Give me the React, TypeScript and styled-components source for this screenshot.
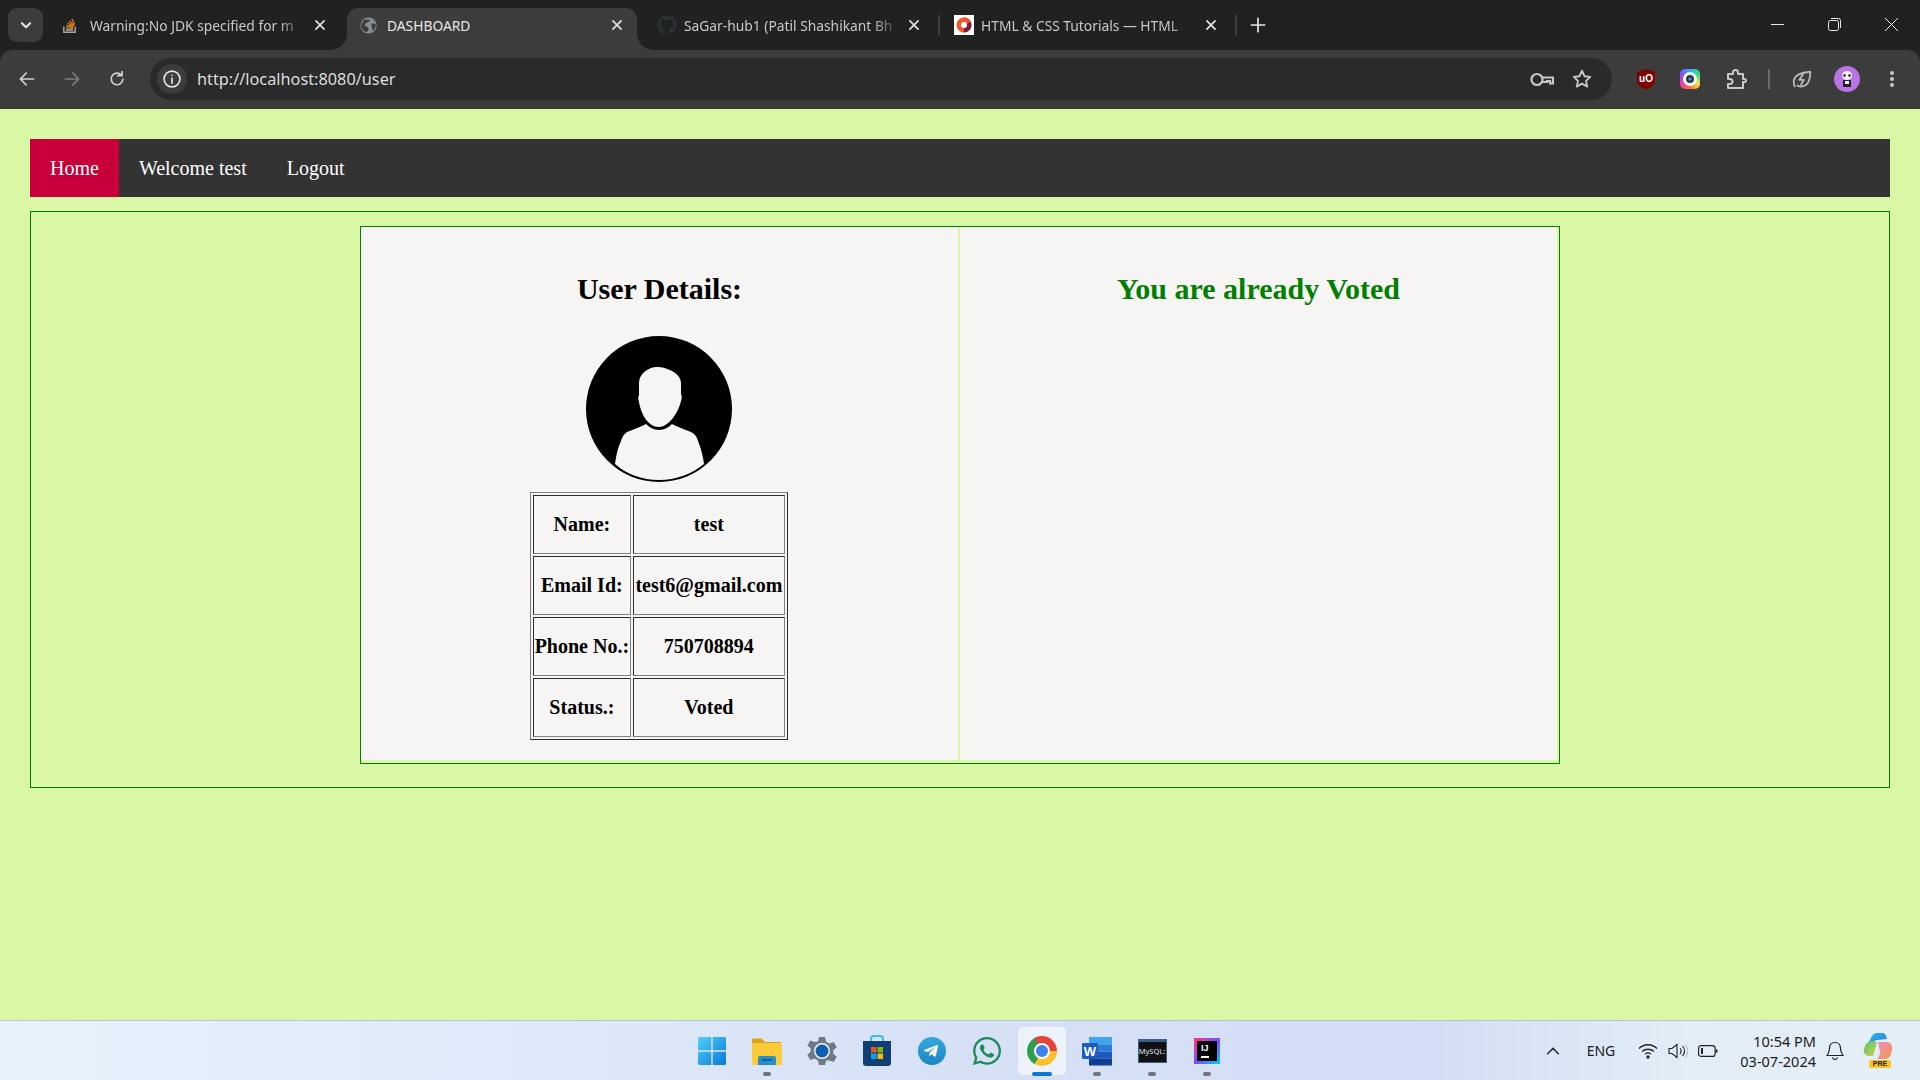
import { ReactNode } from "react";
import { FaGithub, FaTelegramPlane, FaWhatsapp } from "react-icons/fa";
import styled, { createGlobalStyle } from "styled-components";

const UI_FONT = `"Noto Sans", "Open Sans", sans-serif`;

const GlobalStyle = createGlobalStyle`
  html, body {
    margin: 0;
    padding: 0;
    height: 100%;
    overflow: hidden;
    background: #daf7a6;
  }
  #root {
    height: 100%;
  }
`;

const Screen = styled.div`
  display: flex;
  flex-direction: column;
  height: 1080px;
  background: #202222;
`;

/* browser chrome */
const TabStrip = styled.div`
  display: flex;
  align-items: flex-end;
  height: 50px;
  background: #202222;
  font-family: ${UI_FONT};
`;

const TabSearch = styled.div`
  display: flex;
  align-items: center;
  justify-content: center;
  width: 35px;
  height: 34px;
  margin: 0 7px 8px 8px;
  border-radius: 9px;
  background: #3c3c3c;
`;

const Tab = styled.div<{ $active?: boolean; $divider?: boolean }>`
  position: relative;
  display: flex;
  align-items: center;
  flex: 0 0 290px;
  min-width: 0;
  height: 42px;
  margin-right: 7px;
  padding: 0 13px 8px 13px;
  box-sizing: border-box;
  border-radius: 11px 11px 0 0;
  background: ${({ $active }) => ($active ? "#3c3c3c" : "transparent")};
  color: ${({ $active }) => ($active ? "#e8e8e8" : "#c8c8c8")};
  font-size: 13.8px;

  ${({ $active }) =>
    $active &&
    `
    &::before, &::after {
      content: "";
      position: absolute;
      bottom: 0;
      width: 16px;
      height: 16px;
    }
    &::before {
      left: -16px;
      background: radial-gradient(circle at 0 0, #202222 15.5px, #3c3c3c 16px);
    }
    &::after {
      right: -16px;
      background: radial-gradient(circle at 100% 0, #202222 15.5px, #3c3c3c 16px);
    }
  `}

  ${({ $divider }) =>
    $divider &&
    `
    &::after {
      content: "";
      position: absolute;
      right: -6px;
      top: 7px;
      width: 2px;
      height: 20px;
      background: #3f4141;
    }
  `}
`;

const TabIcon = styled.span`
  display: flex;
  flex: 0 0 20px;
  justify-content: flex-start;
  margin-right: 7px;
`;

const TabLabel = styled.span<{ $fade?: boolean }>`
  flex: 1;
  min-width: 0;
  white-space: nowrap;
  margin-right: 10px;
  ${({ $fade }) =>
    $fade &&
    `mask-image: linear-gradient(90deg, #000 88%, rgba(0, 0, 0, 0.15) 100%);`}
`;

const NewTab = styled.div`
  display: flex;
  align-items: center;
  margin: 0 0 10px 10px;
  height: 30px;
  flex: 1;
`;

const WindowControls = styled.div`
  display: flex;
  align-self: flex-start;
  align-items: center;
  gap: 44px;
  height: 48px;
  padding-right: 22px;
`;

const Toolbar = styled.div`
  display: flex;
  align-items: center;
  height: 59px;
  padding: 0 0 1px 17px;
  box-sizing: border-box;
  border-radius: 12px 12px 0 0;
  background: #3c3c3c;
  font-family: ${UI_FONT};
`;

const NavIcons = styled.div`
  display: flex;
  align-items: center;
  gap: 25px;
  width: 133px;
`;

const Omnibox = styled.div`
  display: flex;
  align-items: center;
  width: 1462px;
  height: 42px;
  padding-right: 19px;
  box-sizing: border-box;
  border-radius: 21px;
  background: #292a2a;
`;

const InfoChip = styled.div`
  display: flex;
  align-items: center;
  justify-content: center;
  width: 30px;
  height: 30px;
  margin: 0 10px 0 7px;
  border-radius: 50%;
  background: #3c3c3c;
`;

const UrlText = styled.span`
  flex: 1;
  color: #dedede;
  font-size: 16.3px;
`;

const OmniboxActions = styled.div`
  display: flex;
  align-items: center;
  gap: 17px;
`;

const Extensions = styled.div`
  display: flex;
  align-items: center;
  margin-left: 20px;
`;

const ExtSlot = styled.div<{ $w: number }>`
  display: flex;
  align-items: center;
  justify-content: center;
  width: ${({ $w }) => $w}px;
`;

const ToolbarDivider = styled.div`
  width: 2px;
  height: 20px;
  background: #6a6a6a;
`;

const ColorRing = styled.div`
  display: flex;
  align-items: center;
  justify-content: center;
  width: 20px;
  height: 20px;
  border-radius: 5px;
  background: conic-gradient(#2db4ff, #2be07d, #f7e04b, #f5703c, #f23aa3, #8a4dff, #2db4ff);
`;

const RingCenter = styled.div`
  width: 8px;
  height: 8px;
  border-radius: 50%;
  border: 3px solid #fff;
  background: radial-gradient(circle, #5d86a8 0 20%, #25394d 35%);
`;

/* page */
const Page = styled.main`
  flex: 1;
  padding: 30px 30px 0;
  background: #daf7a6;
  font-family: "Liberation Serif", "Times New Roman", serif;
`;

const NavBar = styled.nav`
  display: flex;
  height: 58px;
  background: #333;
`;

const NavLink = styled.a<{ $active?: boolean }>`
  display: flex;
  align-items: center;
  padding: 0 20px;
  background: ${({ $active }) => ($active ? "#c70039" : "transparent")};
  color: #fff;
  font-size: 20px;
`;

const Section = styled.section`
  height: 577px;
  margin-top: 14px;
  padding-top: 14px;
  box-sizing: border-box;
  border: 1px solid green;
`;

const Card = styled.div`
  display: grid;
  grid-template-columns: 599px 597px;
  width: 1200px;
  height: 538px;
  margin: 0 auto;
  padding: 0 2px 3px 0;
  box-sizing: border-box;
  border: 1px solid green;
`;

const Column = styled.div<{ $divided?: boolean }>`
  display: flex;
  flex-direction: column;
  align-items: center;
  padding-top: 45px;
  box-sizing: border-box;
  background: #f6f5f3;
  border-right: ${({ $divided }) => ($divided ? "2px solid #daf7a6" : "none")};
`;

const Heading = styled.h2<{ $ok?: boolean }>`
  margin: 0;
  font-size: 30px;
  line-height: 34px;
  font-weight: bold;
  color: ${({ $ok }) => ($ok ? "green" : "#000")};
`;

const Avatar = styled.svg`
  display: block;
  width: 146px;
  height: 146px;
  margin: 30px 2px 10px 0;
`;

const DetailsTable = styled.table`
  width: 258px;
  margin-right: 2px;
  border: 1px outset gray;
  border-spacing: 2px;
  font-size: 20px;
  font-weight: bold;
  text-align: center;
  color: #000;
`;

const Cell = styled.td`
  height: 59px;
  padding: 1px;
  box-sizing: border-box;
  border: 1px inset gray;
`;

/* windows taskbar */
const Taskbar = styled.footer`
  position: relative;
  display: flex;
  align-items: center;
  justify-content: center;
  height: 60px;
  box-sizing: border-box;
  border-top: 1px solid #b9c3cf;
  background: linear-gradient(90deg, #e8f2fc 0%, #dfeafa 25%, #d6e1f6 50%, #d3def4 75%, #e2edf6 88%, #e3eef6 100%);
  font-family: ${UI_FONT};
`;

const TaskIcons = styled.div`
  display: flex;
  gap: 7px;
  height: 48px;
  margin-right: 1px;
`;

const TaskItem = styled.div<{ $active?: boolean; $open?: boolean }>`
  position: relative;
  display: flex;
  align-items: center;
  justify-content: center;
  width: 48px;
  height: 48px;
  border-radius: 5px;
  background: ${({ $active }) => ($active ? "#eef2fb" : "transparent")};

  &::after {
    content: "";
    display: ${({ $active, $open }) => ($active || $open ? "block" : "none")};
    position: absolute;
    bottom: -1px;
    left: 50%;
    transform: translateX(-50%);
    width: ${({ $active }) => ($active ? "20px" : "8px")};
    height: 4px;
    border-radius: 2px;
    background: ${({ $active }) => ($active ? "#0a78d4" : "#6e747c")};
  }
`;

const ChromeLogo = styled.div`
  display: flex;
  align-items: center;
  justify-content: center;
  width: 30px;
  height: 30px;
  border-radius: 50%;
  background: conic-gradient(#e5443a 0 90deg, #fbc02d 90deg 210deg, #2f9e50 210deg 330deg, #e5443a 330deg);
`;

const ChromeEye = styled.div`
  width: 12px;
  height: 12px;
  border: 2.5px solid #fff;
  border-radius: 50%;
  background: #3b82f0;
`;

const TelegramBadge = styled.div`
  display: flex;
  align-items: center;
  justify-content: center;
  width: 28px;
  height: 28px;
  padding-right: 2px;
  box-sizing: border-box;
  border-radius: 50%;
  background: linear-gradient(#35a7e0, #1c87c4);
  color: #fff;
  font-size: 16px;
`;

const MysqlIcon = styled.div`
  width: 29px;
  height: 24px;
  padding-top: 5px;
  box-sizing: border-box;
  border: 1px solid #3a5f86;
  border-top-width: 3px;
  background: #101216;
  color: #e4e4e4;
  font-size: 7.5px;
  line-height: 8px;
  text-align: center;
  white-space: nowrap;
`;

const IdeaIcon = styled.div`
  display: flex;
  flex-direction: column;
  justify-content: space-between;
  width: 26px;
  height: 26px;
  padding: 3px 4px;
  box-sizing: border-box;
  border: 3px solid;
  border-image: linear-gradient(135deg, #ff318c, #7b4dff 50%, #07c3f2) 1;
  background: #000;
  color: #fff;
  font-family: "Liberation Sans", sans-serif;
  font-size: 9px;
  font-weight: bold;
  line-height: 9px;
`;

const IdeaBar = styled.div`
  width: 8px;
  height: 1.5px;
  background: #fff;
`;

const Tray = styled.div`
  position: absolute;
  top: 0;
  bottom: 0;
  right: 0;
  display: flex;
  align-items: center;
  color: #1b1b1b;
`;

const TraySlot = styled.div<{ $w: number }>`
  display: flex;
  justify-content: center;
  width: ${({ $w }) => $w}px;
`;

const TrayLang = styled.span`
  width: 64px;
  text-align: center;
  font-size: 14px;
`;

const Clock = styled.div`
  width: 93px;
  text-align: right;
  font-size: 14.5px;
  line-height: 20px;
`;

const PreBadge = styled.span`
  position: absolute;
  left: 6px;
  top: 27px;
  width: 22px;
  height: 8px;
  border-radius: 2px;
  background: #f7c325;
  color: #222;
  font-family: "Liberation Sans", sans-serif;
  font-size: 7px;
  font-weight: bold;
  line-height: 8px;
  text-align: center;
`;

const CopilotWrap = styled.div`
  position: relative;
  width: 30px;
  height: 36px;
  margin: 0 27px 0 9px;
`;

function StrokeIcon({
  size = 20,
  color = "#c7c7c7",
  width = 2,
  children,
}: {
  size?: number;
  color?: string;
  width?: number;
  children: ReactNode;
}) {
  return (
    <svg
      width={size}
      height={size}
      viewBox="0 0 24 24"
      fill="none"
      stroke={color}
      strokeWidth={width}
      strokeLinecap="round"
      strokeLinejoin="round"
    >
      {children}
    </svg>
  );
}

const CloseIcon = () => (
  <StrokeIcon size={14} color="#e0e0e0" width={3}>
    <path d="M5 5l14 14M19 5L5 19" />
  </StrokeIcon>
);

const StackIcon = () => (
  <svg width="14" height="16" viewBox="0 0 14 16" fill="none">
    <path d="M.8 9.500v5.700h11.400V9.500" stroke="#a8a8a8" strokeWidth="1.400" />
    <path d="M3 13h7" stroke="#bcbbbb" strokeWidth="1.400" />
    <path d="M3 10.800l7 .5M3.400 8.500l6.800 1.500M4.500 6.200l6 3M6.300 4l4.800 4.300M8.800 1.800l3 5.700" stroke="#e77b1c" strokeWidth="1.300" />
  </svg>
);

const GlobeIcon = () => (
  <svg width="17" height="17" viewBox="0 0 20 20">
    <circle cx="10" cy="10" r="9.500" fill="#8a8d90" />
    <path d="M6 2.500c2 1 4 1 5.500.5.500 1.500-1 3-3 3.500S5 8 6 10s3 1 4 3-1 3.500-2 5C4 17 1 13.500 1.500 9.500 2 6.500 4 4 6 2.500zM14 8c2-.5 3.500-.5 4.500.5.300 3-1 6-3.500 8-1-2-.5-3.500-1-5S13 9 14 8z" fill="#3c3c3c" />
  </svg>
);

const TutorialIcon = () => (
  <svg width="20" height="20" viewBox="0 0 20 20">
    <rect width="20" height="20" fill="#fff" />
    <circle cx="10" cy="10" r="7.500" fill="#f0582b" />
    <path d="M10 2.500a7.500 7.500 0 0 1 0 15zM13 5.500a7.500 7.500 0 0 0-3-3" fill="#7a1f3d" />
    <path d="M10 2.500a7.500 7.500 0 0 1 6.500 4L13 9l-3-2z" fill="#f0582b" />
    <circle cx="10" cy="10" r="3" fill="#fff" />
  </svg>
);

const tabs = [
  { title: "Warning:No JDK specified for m", icon: <StackIcon />, fade: true },
  { title: "DASHBOARD", icon: <GlobeIcon />, active: true },
  {
    title: "SaGar-hub1 (Patil Shashikant Bh",
    icon: <FaGithub size={20} color="#2b3036" />,
    fade: true,
    divider: true,
  },
  { title: "HTML & CSS Tutorials — HTML", icon: <TutorialIcon />, fade: true, divider: true },
];

const taskItems: { key: string; open?: boolean; active?: boolean; icon: ReactNode }[] = [
  {
    key: "start",
    icon: (
      <svg width="30" height="30" viewBox="0 0 30 30">
        <defs>
          <linearGradient id="win" x1="0" y1="0" x2="1" y2="1">
            <stop offset="0" stopColor="#4fd0fb" />
            <stop offset="1" stopColor="#0a78d8" />
          </linearGradient>
        </defs>
        <path d="M1 2.500A1.500 1.500 0 0 1 2.500 1h11.800v13.300H1zM15.700 1h11.800A1.500 1.500 0 0 1 29 2.500v11.800H15.700zM1 15.700h13.300V29H2.500A1.500 1.500 0 0 1 1 27.500zM15.700 15.700H29v11.800a1.500 1.500 0 0 1-1.500 1.500H15.700z" fill="url(#win)" />
      </svg>
    ),
  },
  {
    key: "files",
    open: true,
    icon: (
      <svg width="30" height="30" viewBox="0 0 30 30">
        <path d="M0 4a1.500 1.500 0 0 1 1.500-1.500h8L13 6h16v6H0z" fill="#dba112" />
        <path d="M0 7h28.500a1.500 1.500 0 0 1 1.500 1.500V28a1 1 0 0 1-1 1H1a1 1 0 0 1-1-1z" fill="#fccb3c" />
        <path d="M6 22a2 2 0 0 1 2-2h14a2 2 0 0 1 2 2v7H6z" fill="#2a8dc8" />
        <rect x="10" y="23" width="10" height="1.600" fill="#0d5a92" />
      </svg>
    ),
  },
  {
    key: "settings",
    icon: (
      <svg width="30" height="30" viewBox="0 0 30 30">
        <path d="M12 1h6l1 4.500 3.300 1.900 4.400-1.400 3 5.200-3.400 3.100v3.400l3.400 3.100-3 5.200-4.400-1.400L19 24.500 18 29h-6l-1-4.500-3.300-1.900-4.400 1.400-3-5.200 3.400-3.100v-3.400L.3 9.700l3-5.200 4.400 1.400L11 5.500z" fill="#6f7a85" />
        <circle cx="15" cy="15" r="8" fill="#eef2f8" />
        <circle cx="15" cy="15" r="6.500" fill="#0f5fae" />
      </svg>
    ),
  },
  {
    key: "store",
    icon: (
      <svg width="30" height="32" viewBox="0 0 30 32">
        <path d="M9 7V4a3 3 0 0 1 3-3h6a3 3 0 0 1 3 3v3" fill="none" stroke="#2ec2e8" strokeWidth="2" />
        <path d="M1 6h28v22a3 3 0 0 1-3 3H4a3 3 0 0 1-3-3z" fill="#123f73" />
        <rect x="9" y="12" width="5.500" height="5.500" fill="#f25022" />
        <rect x="15.500" y="12" width="5.500" height="5.500" fill="#7fba00" />
        <rect x="9" y="18.500" width="5.500" height="5.500" fill="#00a4ef" />
        <rect x="15.500" y="18.500" width="5.500" height="5.500" fill="#ffb900" />
      </svg>
    ),
  },
  {
    key: "telegram",
    icon: (
      <TelegramBadge>
        <FaTelegramPlane />
      </TelegramBadge>
    ),
  },
  { key: "whatsapp", icon: <FaWhatsapp size={32} color="#1f8a5b" /> },
  {
    key: "chrome",
    active: true,
    icon: (
      <ChromeLogo>
        <ChromeEye />
      </ChromeLogo>
    ),
  },
  {
    key: "word",
    open: true,
    icon: (
      <svg width="30" height="30" viewBox="0 0 30 30">
        <rect x="7" y="1" width="23" height="7.500" fill="#41a5ee" />
        <rect x="7" y="8.500" width="23" height="7" fill="#2b7cd3" />
        <rect x="7" y="15.500" width="23" height="7" fill="#185abd" />
        <rect x="7" y="22.500" width="23" height="7" fill="#103f91" />
        <rect y="7" width="16" height="16" rx="1" fill="#1a5dbe" />
        <text x="8" y="19.500" fill="#fff" fontSize="13" fontWeight="bold" fontFamily="Liberation Sans" textAnchor="middle">W</text>
      </svg>
    ),
  },
  { key: "mysql", open: true, icon: <MysqlIcon>MySQL:</MysqlIcon> },
  {
    key: "idea",
    open: true,
    icon: (
      <IdeaIcon>
        IJ
        <IdeaBar />
      </IdeaIcon>
    ),
  },
];

const details = [
  ["Name:", "test"],
  ["Email Id:", "test6@gmail.com"],
  ["Phone No.:", "750708894"],
  ["Status.:", "Voted"],
];

export default function App() {
  return (
    <Screen>
      <GlobalStyle />
      <TabStrip>
        <TabSearch>
          <StrokeIcon size={14} color="#e8e8e8" width={3.500}>
            <path d="M5 9l7 7 7-7" />
          </StrokeIcon>
        </TabSearch>
        {tabs.map((tab) => (
          <Tab key={tab.title} $active={tab.active} $divider={tab.divider}>
            <TabIcon>{tab.icon}</TabIcon>
            <TabLabel $fade={tab.fade}>{tab.title}</TabLabel>
            <CloseIcon />
          </Tab>
        ))}
        <NewTab>
          <StrokeIcon size={20} color="#e8e8e8" width={2}>
            <path d="M12 4v16M4 12h16" />
          </StrokeIcon>
        </NewTab>
        <WindowControls>
          <svg width="13" height="13" viewBox="0 0 13 13" stroke="#e8e8e8" fill="none">
            <path d="M0 6.500h13" />
          </svg>
          <svg width="13" height="13" viewBox="0 0 13 13" stroke="#e8e8e8" fill="none">
            <rect x="0.500" y="2.500" width="10" height="10" rx="2" />
            <path d="M3 .5h7.500a2 2 0 0 1 2 2V10" />
          </svg>
          <svg width="13" height="13" viewBox="0 0 13 13" stroke="#e8e8e8" fill="none">
            <path d="M0 0l13 13M13 0L0 13" />
          </svg>
        </WindowControls>
      </TabStrip>

      <Toolbar>
        <NavIcons>
          <StrokeIcon size={20} color="#d0d0d0">
            <path d="M20 12H4M11 5l-7 7 7 7" />
          </StrokeIcon>
          <StrokeIcon size={20} color="#7d7d7d">
            <path d="M4 12h16M13 5l7 7-7 7" />
          </StrokeIcon>
          <StrokeIcon size={20} color="#d0d0d0">
            <path d="M19 12a7 7 0 1 1-2-5M18 3v5h-5" />
          </StrokeIcon>
        </NavIcons>
        <Omnibox>
          <InfoChip>
            <StrokeIcon size={20} color="#e4e4e4">
              <circle cx="12" cy="12" r="9.500" />
              <path d="M12 11v6M12 7.500v.1" />
            </StrokeIcon>
          </InfoChip>
          <UrlText>http://localhost:8080/user</UrlText>
          <OmniboxActions>
            <svg width="24" height="15" viewBox="0 0 24 15" fill="none" stroke="#c7c7c7" strokeWidth="2.200">
              <circle cx="7" cy="7.500" r="5.500" />
              <path d="M12.500 5.500H23v6h-3V9h-3v1h-5" />
            </svg>
            <StrokeIcon size={22} color="#c7c7c7">
              <path d="M12 3l2.800 6 6.200.7-4.600 4.300 1.300 6.300L12 17l-5.700 3.300L7.600 14 3 9.700 9.200 9z" />
            </StrokeIcon>
          </OmniboxActions>
        </Omnibox>
        <Extensions>
          <ExtSlot $w={27}>
            <svg width="20" height="22" viewBox="0 0 20 22">
              <path d="M10 1l9 3v8c0 5-4 8-9 9-5-1-9-4-9-9V4z" fill="#800000" />
              <text x="10" y="14" fill="#fff" fontSize="10" fontWeight="bold" fontFamily="Liberation Sans" textAnchor="middle">uO</text>
            </svg>
          </ExtSlot>
          <ExtSlot $w={62}>
            <ColorRing>
              <RingCenter />
            </ColorRing>
          </ExtSlot>
          <ExtSlot $w={30}>
            <StrokeIcon size={24} color="#c7c7c7">
              <path d="M4 7h5V5.500a2.500 2.500 0 0 1 5 0V7h5v5h1.500a1.500 1.500 0 0 1 0 3H19v6H4v-4h2a2.500 2.500 0 0 0 0-5H4z" />
            </StrokeIcon>
          </ExtSlot>
          <ExtSlot $w={36}>
            <ToolbarDivider />
          </ExtSlot>
          <ExtSlot $w={30}>
            <StrokeIcon size={22} color="#b8b8b8">
              <path d="M4 20c-2-5-1-9 3-12 4-3 9-3 14-4 0 6-1 11-4 14-3 2-7 3-10 1M13 7l-4 6h5l-3 5" />
            </StrokeIcon>
          </ExtSlot>
          <ExtSlot $w={60}>
            <svg width="26" height="26" viewBox="0 0 26 26">
              <circle cx="13" cy="13" r="13" fill="#b873e4" />
              <ellipse cx="13" cy="9.500" rx="5" ry="4.500" fill="#f0f0f0" />
              <circle cx="10.500" cy="9.500" r="1.300" fill="#222" />
              <circle cx="15.500" cy="9.500" r="1.300" fill="#222" />
              <path d="M9 14h8v7H9z" fill="#222" />
              <path d="M11 15h4v3h-4z" fill="#f0f0f0" />
            </svg>
          </ExtSlot>
          <ExtSlot $w={30}>
            <svg width="6" height="18" viewBox="0 0 6 18" fill="#c7c7c7">
              <circle cx="3" cy="3" r="2" />
              <circle cx="3" cy="9" r="2" />
              <circle cx="3" cy="15" r="2" />
            </svg>
          </ExtSlot>
        </Extensions>
      </Toolbar>

      <Page>
        <NavBar>
          <NavLink $active>Home</NavLink>
          <NavLink>Welcome test</NavLink>
          <NavLink>Logout</NavLink>
        </NavBar>
        <Section>
          <Card>
            <Column $divided>
              <Heading>User Details:</Heading>
              <Avatar viewBox="0 0 146 146">
                <circle cx="73" cy="73" r="73" fill="#000" />
                <path
                  d="M71 31C80 31 95 37 95 47L95 58C96 60 96 62 95 65C92 78 82 91 73 91C62 91 55 78 53 66C52 63 52 61 53 59L53 47C53 38 62 31 71 31Z"
                  fill="#f6f5f3"
                />
                <path
                  d="M60 88c3 3 8 6 13 6s10-3 13-6c5 3 12 5 19 8 4 2 6 5 7 9 3 7 5 15 6 23-12 10-28 16-45 16s-33-6-44-16c1-8 3-17 6-23 1-4 3-7 6-9 7-3 14-5 19-8z"
                  fill="#f6f5f3"
                />
              </Avatar>
              <DetailsTable>
                <tbody>
                  {details.map(([label, value]) => (
                    <tr key={label}>
                      <Cell>{label}</Cell>
                      <Cell>{value}</Cell>
                    </tr>
                  ))}
                </tbody>
              </DetailsTable>
            </Column>
            <Column>
              <Heading $ok>You are already Voted</Heading>
            </Column>
          </Card>
        </Section>
      </Page>

      <Taskbar>
        <TaskIcons>
          {taskItems.map((item) => (
            <TaskItem key={item.key} $active={item.active} $open={item.open}>
              {item.icon}
            </TaskItem>
          ))}
        </TaskIcons>
        <Tray>
          <TraySlot $w={32}>
            <StrokeIcon size={16} color="#222" width={2.200}>
              <path d="M4 16l8-8 8 8" />
            </StrokeIcon>
          </TraySlot>
          <TrayLang>ENG</TrayLang>
          <TraySlot $w={30}>
            <svg width="20" height="16" viewBox="0 0 20 16" fill="none" stroke="#222" strokeWidth="1.300">
              <path d="M1 5.500c5-5 13-5 18 0M4 8.500c3.500-3 8.500-3 12 0M7 11c2-1.500 4-1.500 6 0" />
              <circle cx="10" cy="14" r="1" fill="#222" />
            </svg>
          </TraySlot>
          <TraySlot $w={30}>
            <svg width="20" height="16" viewBox="0 0 20 16" fill="none" stroke="#222" strokeWidth="1.100">
              <path d="M1 5.500h3L9 1.500v13l-5-4H1zM12 5c1.500 2 1.500 4 0 6M14.500 3c2.500 3 2.500 7 0 10" />
              <path d="M17 1.500c3.500 4 3.500 9 0 13" stroke="#bbb" />
            </svg>
          </TraySlot>
          <TraySlot $w={30}>
            <svg width="20" height="12" viewBox="0 0 20 12" fill="none" stroke="#222" strokeWidth="1.200">
              <rect x="0.600" y="0.600" width="16.500" height="10.800" rx="2.500" />
              <rect x="3" y="3" width="2" height="6" fill="#222" stroke="none" />
              <path d="M18.500 4.500v3" strokeWidth="2" />
            </svg>
          </TraySlot>
          <Clock>
            10:54 PM
            <br />
            03-07-2024
          </Clock>
          <TraySlot $w={38}>
            <svg width="18" height="20" viewBox="0 0 18 20" fill="none" stroke="#222" strokeWidth="1.200">
              <path d="M9 1.500c-3.500 0-5.500 2.500-5.500 6 0 3.500-1 5-2.500 7h16c-1.500-2-2.500-3.500-2.500-7 0-3.500-2-6-5.500-6zM6.500 16.500c.5 1.500 1.500 2 2.500 2s2-.5 2.500-2" />
            </svg>
          </TraySlot>
          <CopilotWrap>
            <svg width="30" height="28" viewBox="0 0 30 28">
              <defs>
                <linearGradient id="copA" x1="0" y1="0" x2="1" y2="1">
                  <stop offset="0" stopColor="#2cc1e8" />
                  <stop offset="1" stopColor="#2a6fe0" />
                </linearGradient>
                <linearGradient id="copB" x1="0" y1="0" x2="1" y2="1">
                  <stop offset="0" stopColor="#f08bd0" />
                  <stop offset="1" stopColor="#f59a3a" />
                </linearGradient>
                <linearGradient id="copC" x1="0" y1="0" x2="1" y2="1">
                  <stop offset="0" stopColor="#4fc36b" />
                  <stop offset="1" stopColor="#d8d34c" />
                </linearGradient>
              </defs>
              <path d="M9 3c1-2 3-3 5-3h5c3 0 4 2 5 6l-10 1c-2 0-3 1-3.500 3L8 14H3z" fill="url(#copA)" />
              <path d="M2 13c1-3 4-5 7-5l5 1-4 14H6c-4 0-6-4-5-7z" fill="url(#copC)" />
              <path d="M15 9h9c4 0 6 4 5 8l-1 4c-1 3-3 5-6 5h-8c2-2 3-4 3-7z" fill="url(#copB)" />
            </svg>
            <PreBadge>PRE</PreBadge>
          </CopilotWrap>
        </Tray>
      </Taskbar>
    </Screen>
  );
}
